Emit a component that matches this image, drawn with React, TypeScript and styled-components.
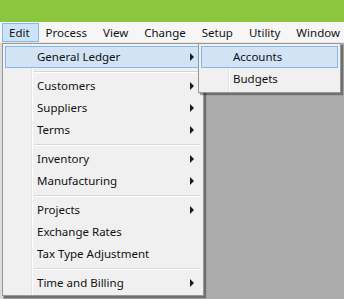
import styled, { createGlobalStyle } from "styled-components";

const GlobalStyle = createGlobalStyle`
  html, body {
    margin: 0;
    padding: 0;
    background: #ababab;
  }
  * {
    box-sizing: border-box;
  }
`;

const topItems = ["Edit", "Process", "View", "Change", "Setup", "Utility", "Window"];

type MenuEntry =
  | { kind: "item"; label: string; sub?: boolean; active?: boolean }
  | { kind: "sep" };

const editItems: MenuEntry[] = [
  { kind: "item", label: "General Ledger", sub: true, active: true },
  { kind: "sep" },
  { kind: "item", label: "Customers", sub: true },
  { kind: "item", label: "Suppliers", sub: true },
  { kind: "item", label: "Terms", sub: true },
  { kind: "sep" },
  { kind: "item", label: "Inventory", sub: true },
  { kind: "item", label: "Manufacturing", sub: true },
  { kind: "sep" },
  { kind: "item", label: "Projects", sub: true },
  { kind: "item", label: "Exchange Rates" },
  { kind: "item", label: "Tax Type Adjustment" },
  { kind: "sep" },
  { kind: "item", label: "Time and Billing", sub: true },
];

const ledgerItems = [
  { label: "Accounts", active: true },
  { label: "Budgets", active: false },
];

const App = () => {
  return (
    <>
      <GlobalStyle />
      <Window>
        <TitleBar />
        <MenuBar>
          {topItems.map((t, i) => (
            <TopItem key={t} $open={i === 0}>
              {t}
            </TopItem>
          ))}
        </MenuBar>
        <Workspace>
          <SideStrip />
        </Workspace>

        <Dropdown>
          {editItems.map((e, i) =>
            e.kind === "sep" ? (
              <Separator key={i} />
            ) : (
              <Item key={i} $active={e.active}>
                <ItemLabel>{e.label}</ItemLabel>
                {e.sub && <Arrow />}
              </Item>
            )
          )}
        </Dropdown>

        <SubMenu>
          {ledgerItems.map((e) => (
            <SubItem key={e.label} $active={e.active}>
              <ItemLabel>{e.label}</ItemLabel>
            </SubItem>
          ))}
        </SubMenu>
      </Window>
    </>
  );
};

const Window = styled.div`
  position: relative;
  width: 344px;
  height: 299px;
  display: flex;
  flex-direction: column;
  font-family: "Noto Sans", "Open Sans", sans-serif;
  font-size: 11.5px;
  color: #111;
  overflow: hidden;
`;

const TitleBar = styled.div`
  height: 22px;
  background: #8cc63f;
`;

const MenuBar = styled.div`
  height: 21px;
  display: flex;
  align-items: stretch;
  padding: 1px 0 0 2px;
  background: #f6f6f6;
  border-bottom: 1px solid #e6e6e6;
`;

const TopItem = styled.div<{ $open?: boolean }>`
  display: flex;
  align-items: center;
  padding: 0 8px 1px 6px;
  height: 19px;
  border: 1px solid ${(p) => (p.$open ? "#84b7ea" : "transparent")};
  background: ${(p) => (p.$open ? "#cce3f8" : "transparent")};
  letter-spacing: 0;
`;

const Workspace = styled.div`
  flex: 1;
  display: flex;
  background: #ababab;
`;

const SideStrip = styled.div`
  width: 3px;
  background: #dcdcdc;
`;

const Dropdown = styled.div`
  position: absolute;
  left: 2px;
  top: 43px;
  width: 202px;
  height: 253px;
  padding: 2px 2px;
  display: flex;
  flex-direction: column;
  background: #f0f0f0;
  border: 1px solid #979797;
  box-shadow: 2px 2px 1px rgba(0, 0, 0, 0.35);
  background-image: linear-gradient(
    to right,
    transparent 28px,
    #e2e3e3 28px,
    #e2e3e3 29px,
    #ffffff 29px,
    #ffffff 30px,
    transparent 30px
  );
`;

const Item = styled.div<{ $active?: boolean }>`
  position: relative;
  height: 22px;
  flex-shrink: 0;
  display: flex;
  align-items: center;
  padding-left: 31px;
  border: 1px solid ${(p) => (p.$active ? "#84b7ea" : "transparent")};
  background: ${(p) => (p.$active ? "#d1e3f4" : "transparent")};
`;

const ItemLabel = styled.span`
  padding-bottom: 2px;
  white-space: nowrap;
`;

const Arrow = styled.span`
  position: absolute;
  left: 184px;
  top: 6px;
  width: 0;
  height: 0;
  border-top: 4px solid transparent;
  border-bottom: 4px solid transparent;
  border-left: 4px solid #1a1a1a;
`;

const Separator = styled.div`
  height: 7px;
  flex-shrink: 0;
  margin-left: 29px;
  display: flex;
  align-items: center;
  &::after {
    content: "";
    flex: 1;
    height: 1px;
    background: #d7d7d7;
    border-bottom: 1px solid #ffffff;
  }
`;

const SubMenu = styled.div`
  position: absolute;
  left: 198px;
  top: 43px;
  width: 143px;
  height: 50px;
  padding: 2px 2px;
  display: flex;
  flex-direction: column;
  background: #f0f0f0;
  border: 1px solid #979797;
  box-shadow: 2px 2px 1px rgba(0, 0, 0, 0.35);
  background-image: linear-gradient(
    to right,
    transparent 29px,
    #e2e3e3 29px,
    #e2e3e3 30px,
    #ffffff 30px,
    #ffffff 31px,
    transparent 31px
  );
`;

const SubItem = styled(Item)`
  padding-left: 31px;
`;

export default App;
